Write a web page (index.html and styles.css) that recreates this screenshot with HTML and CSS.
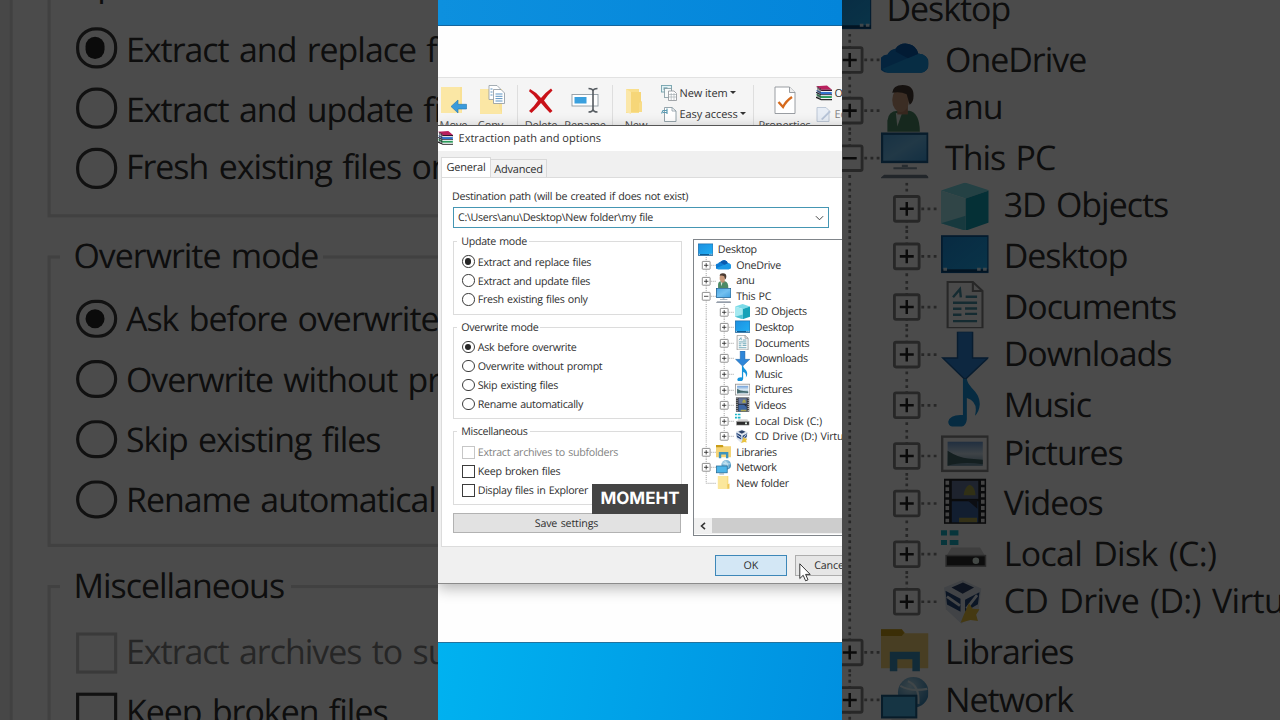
FILE: index.html
```html
<!DOCTYPE html>
<html lang="en">
<head>
<meta charset="utf-8">
<title>Extraction path and options</title>
<link rel="stylesheet" href="styles.css">
</head>
<body>
<svg class="defs" aria-hidden="true">
  <defs>
    <linearGradient id="gScreen" x1="0" y1="0" x2="1" y2="1"><stop offset="0" stop-color="#1e90e0"/><stop offset="1" stop-color="#1fb0f5"/></linearGradient>
    <linearGradient id="gPc" x1="0" y1="0" x2="1" y2="1"><stop offset="0" stop-color="#4fa8e4"/><stop offset=".5" stop-color="#72c0f0"/><stop offset="1" stop-color="#3f9fe0"/></linearGradient>
    <linearGradient id="gSky" x1="0" y1="0" x2="0" y2="1"><stop offset="0" stop-color="#6f9fd8"/><stop offset=".5" stop-color="#d5e6f2"/><stop offset="1" stop-color="#6d93a8"/></linearGradient>
    <radialGradient id="gGlobe" cx=".4" cy=".3" r=".8"><stop offset="0" stop-color="#b9e0f2"/><stop offset="1" stop-color="#2a7fb4"/></radialGradient>
  </defs>
  <symbol id="line" viewBox="0 0 18.5 15.58"><path class="dots" d="M8.2 0V15.58"/></symbol>
  <symbol id="plus" viewBox="0 0 18.5 15.58"><path class="dots" d="M8.2 0V15.58M12.8 8.3H18.5"/><rect class="box" x="4.3" y="4.4" width="7.8" height="7.8" rx=".5"/><path class="sign" d="M6 8.3H10.4M8.2 6.1V10.5"/></symbol>
  <symbol id="plusend" viewBox="0 0 18.5 15.58"><path class="dots" d="M8.2 0V4M12.8 8.3H18.5"/><rect class="box" x="4.3" y="4.4" width="7.8" height="7.8" rx=".5"/><path class="sign" d="M6 8.3H10.4M8.2 6.1V10.5"/></symbol>
  <symbol id="minus" viewBox="0 0 18.5 15.58"><path class="dots" d="M8.2 0V15.58M12.8 8.3H18.5"/><rect class="box" x="4.3" y="4.4" width="7.8" height="7.8" rx=".5"/><path class="sign" d="M6 8.3H10.4"/></symbol>
  <symbol id="elbow" viewBox="0 0 18.5 15.58"><path class="dots" d="M8.2 0V8.3H18.5"/></symbol>

  <symbol id="desktop" viewBox="0 0 16 16"><rect x=".3" y="2" width="15.4" height="12" fill="url(#gScreen)" stroke="#0f5d9c" stroke-width=".6"/><path d="M.3 13H15.7V14H.3Z" fill="#0a4474"/><path d="M.8 13H2M12 13h1.2M14 13h1.2" stroke="#d7f0ff" stroke-width="1"/></symbol>
  <symbol id="cloud" viewBox="0 0 16 16"><path d="M2.500 13A3 3 0 0 1 2.200 6.900C3 5.500 3.800 5.200 4.900 5A4.300 4.300 0 0 1 12.500 6.700A3.200 3.200 0 0 1 16 10 2.900 2.900 0 0 1 13.400 13Z" fill="#0f7bd2"/><path d="M2.500 13Q1 12.600 .6 11.700L9.300 8 12.500 6.700A3.200 3.200 0 0 1 16 10 2.900 2.900 0 0 1 13.400 13Z" fill="#1a99e6"/><path d="M4.900 5A4.300 4.300 0 0 1 12.500 6.700L9 8.200 5 6Z" fill="#0a5bb0"/></symbol>
  <symbol id="person" viewBox="0 0 16 16"><path d="M2.200 16V12Q2.500 9 5.500 8.800H9.500Q13 9.500 13 16Z" fill="#4d8a66"/><path d="M5 9.500 5.500 14 7 9.800Z" fill="#dfe9e2"/><rect x="5.500" y="6.500" width="3.500" height="3.500" fill="#b98568"/><ellipse cx="6.600" cy="5.200" rx="2.800" ry="4" fill="#c99a7c"/><path d="M3.800 2.800Q4 .2 7.300 .2 11 .2 10.900 3.800Q10.900 6 9.600 6.800L8.600 3.300Q6.500 2.300 3.800 2.800Z" fill="#4a3b33"/></symbol>
  <symbol id="pc" viewBox="0 0 16 16"><rect x=".4" y=".6" width="15.200" height="9.400" fill="url(#gPc)" stroke="#1b5f92" stroke-width=".8"/><path d="M4.200 12.100H12M7 11.300H9" stroke="#8798a6" stroke-width=".7"/><path d="M.4 15.200 1.200 14.500H15L15.800 15.200Z" fill="#75808f" stroke="#75808f" stroke-width=".5"/></symbol>
  <symbol id="cube" viewBox="0 0 16 16"><path d="M0 2.600 8 0 16 2.600 8.200 5.300Z" fill="#7adbe8"/><path d="M0 2.600 8.200 5.300V16L0 13.500Z" fill="#a5e9f0"/><path d="M8.200 5.300 16 2.600V13.300L8.200 16Z" fill="#14a2b8"/><path d="M0 13.500 8.200 11V16Z" fill="#4fc3d4"/></symbol>
  <symbol id="docu" viewBox="0 0 16 16"><path d="M2.200 .4H10.600L13.800 3.400V15.700H2.200Z" fill="#fafafa" stroke="#858585" stroke-width=".7"/><path d="M10.600 .4V3.400H13.800" fill="none" stroke="#858585" stroke-width=".7"/><path d="M4 5.500 6.300 2.800 6.600 5.500M8.200 5.300H12M4 7.300H12M4 9.300H6.800M8 9.200H12M4 11.300H6.800M8 11H12M4 13.400H12" fill="none" stroke="#4a92a8" stroke-width=".8"/></symbol>
  <symbol id="down" viewBox="0 0 16 16"><path d="M5.500 0H10.500V8.800H15.600L8 16 .6 8.800H5.500Z" fill="#2f86d8" stroke="#1b5f9f" stroke-width=".5"/></symbol>
  <symbol id="note" viewBox="0 0 16 16"><path d="M7.300 0H8.600C9 3 13 4 12.900 8.500Q12.700 11 11.300 12.200Q12.500 7.500 8.600 6.300V13.500Q8.300 16.300 5 16.300 2.500 16 2.400 14.200 3 11.700 7.300 12Z" fill="#1694dc"/></symbol>
  <symbol id="pict" viewBox="0 0 16 16"><rect x=".4" y="2.300" width="15.200" height="11.400" fill="#fafafa" stroke="#8c8c8c" stroke-width=".8"/><rect x="2.200" y="4" width="11.700" height="8" fill="url(#gSky)"/><path d="M2.200 7Q6 9.400 9 9.600L13.900 10V11.500Q7 10.500 2.200 12Z" fill="#44696c"/></symbol>
  <symbol id="film" viewBox="0 0 16 16"><rect x="1" y=".5" width="14" height="15" fill="#25262a"/><path d="M2.100 1.200V15M13.900 1.200V15" stroke="#e6e6e6" stroke-width="1.200" stroke-dasharray="1.300 .8"/><rect x="3.600" y="1.200" width="8.800" height="6" fill="#66779c"/><rect x="3.600" y="8" width="8.800" height="7" fill="#3d66a3"/><path d="M7.500 6Q8 3 9.500 2.500 11.300 3 11.500 6Z" fill="#a8a548"/><path d="M6 13.500h6v1.500H6Z" fill="#b0a850"/><path d="M3.600 7.500h5l3.500 3V7.500Z" fill="#2b3042"/></symbol>
  <symbol id="disk" viewBox="0 0 16 16"><path d="M0 .8h2v1.700H0ZM2.900 .8h2.900v1.700H2.900ZM0 4h2v1.700H0ZM2.900 4h2.900v1.700H2.900Z" fill="#18b5c9"/><path d="M3.500 6.500H13L14.800 9.500H1.700Z" fill="#d2d2d2"/><rect x="1.700" y="9.200" width="13.100" height="3.500" fill="#2c2c2c" stroke="#8f8f8f" stroke-width=".5"/><circle cx="11.600" cy="10.900" r="1.100" fill="#e5f5ea"/></symbol>
  <symbol id="vbox" viewBox="0 0 16 16"><path d="M1 3 7.200 .5 13.400 3.300 12.500 11 6.800 15 1.600 10.200Z" fill="#dce4ee"/><path d="M3.500 3 7.300 1.300 11 3 7.200 5Z" fill="#2c4269"/><path d="M1.500 4 6.500 6.700V11L2 8.600ZM8 7 12.800 4.500 12.300 8.500 8 11Z" fill="#27477c"/><path d="M2 6 6.300 9M8.500 10 12 5.500" stroke="#e6edf5" stroke-width=".9"/><path d="M9.300 8.200 10.500 10 12.800 10.200 11.700 12 12.300 14.100 9.800 13.800 6.500 14.700 7.600 12Z" fill="#e9c23f"/></symbol>
  <symbol id="library" viewBox="0 0 16 16"><path d="M0 1H7L8.200 2.400H16V14H0Z" fill="#f4d477"/><path d="M0 1H7L7.800 2.300 7 3.300H0Z" fill="#c99d19"/><path d="M3 15V8.500H13V15H10.500V11H5.500V15Z" fill="#3e94bd"/></symbol>
  <symbol id="network" viewBox="0 0 16 16"><circle cx="10.800" cy="5.200" r="5.100" fill="url(#gGlobe)"/><path d="M9 1.500Q13 3 12.500 9M6.500 3Q10 5 15.500 4" fill="none" stroke="#d8edf5" stroke-width=".7"/><rect x=".4" y="6.300" width="11.400" height="7.200" fill="#4db5e8" stroke="#1c618c" stroke-width=".7"/><path d="M3.500 14.700H8.500" stroke="#6e8698" stroke-width=".8"/></symbol>
  <symbol id="folder" viewBox="0 0 16 16"><path d="M2 1H13V14.500H2Z" fill="#f8dd83"/><path d="M2 1H11.500V12L13 14.500H2Z" fill="#fbe79c"/><path d="M12 10 14.200 9V14.500H12Z" fill="#eec85a"/></symbol>
  <symbol id="books" viewBox="0 0 16 16"><path d="M0 1.200 11 .5 16 4.800H5Z" fill="#b8205d"/><path d="M5 4.800H16V6H5.500L0 2Z" fill="#37152a"/><path d="M1 5.200 5 7H15.800V9H5L0 5.500Z" fill="#3272cc"/><path d="M0 6.800 5 9.200H16V10.200H5L0 8Z" fill="#181f38"/><path d="M1 9 5 11H15.800V13H5L0 10Z" fill="#2c9b5b"/><path d="M0 11.500 5 14H16V15.300H5L0 13Z" fill="#1c1c1c"/><path d="M5 6.500H15M5 10.600H15M5 13.600H15" stroke="#e8eef0" stroke-width=".7"/><path d="M2 1.500V13M4 3V14" stroke="#2b2830" stroke-width=".9"/></symbol>

  <symbol id="moveto" viewBox="0 0 28 30"><path d="M1 2H22V28H1Z" fill="#f9e195"/><path d="M1 2H20V22L22 28H1Z" fill="#fbe7a5"/><path d="M11 21.500 18 15V19.300H26.500V24H18V28Z" fill="#3a9bdc" stroke="#2576ac" stroke-width=".6"/></symbol>
  <symbol id="copyto" viewBox="0 0 28 30"><path d="M1 4H23V29H1Z" fill="#f9e195"/><path d="M1 4H20V22L23 29H1Z" fill="#fbe7a5"/><path d="M10 .5H18L21 3.500V14.500H10Z" fill="#fff" stroke="#909aa2" stroke-width=".8"/><path d="M14.500 4.500H22L25.500 8V18.500H14.500Z" fill="#fff" stroke="#8c969e" stroke-width=".8"/><path d="M16.500 9H23.500M16.500 11.300H23.500M16.500 13.600H23.500M16.500 16H23.500M11.500 4H13.500M11.500 7H13.500M11.500 10H13.500" stroke="#5c93c2" stroke-width="1"/></symbol>
  <symbol id="cross" viewBox="0 0 28 30"><path d="M3 4Q9 7 14 13 19 7 24 3.500L25.500 5.500Q20.500 10 17 15.500 21 21 25.500 26L23 28Q18 23 14 18 9.500 23.500 4.500 28L2 26Q7.500 21 11 15.500 7.500 10 2 6.200Z" fill="#c91118"/></symbol>
  <symbol id="rename" viewBox="0 0 30 30"><rect x="1" y="9.500" width="26" height="11.500" fill="#fff" stroke="#909ba3" stroke-width=".9"/><rect x="3.500" y="12" width="12" height="6.500" fill="#3aa0de"/><path d="M17.500 3.500Q21.500 3.500 22 5.800 22.500 3.500 26.500 3.500M22 5V25M17.500 27Q21.500 27 22 24.500 22.500 27 26.500 27" fill="none" stroke="#555b60" stroke-width="1.600"/></symbol>
  <symbol id="bigfolder" viewBox="0 0 28 30"><path d="M4 4H17V28H4Z" fill="#f9df8c"/><path d="M4 4 9 7V29L4 27Z" fill="#fbe7a9"/><path d="M9 7H19V27H9Z" fill="#f6d678"/><path d="M17 18 20 16V27H17Z" fill="#f8dc88"/></symbol>
  <symbol id="props" viewBox="0 0 28 30"><path d="M4 2H18.500L24 7.500V28.500H4Z" fill="#fff" stroke="#8e9398" stroke-width=".9"/><path d="M18.500 2V7.500H24" fill="#eee" stroke="#8e9398" stroke-width=".9"/><path d="M7.500 17 12 22Q15 16 21 12" fill="none" stroke="#d66a1c" stroke-width="2.400"/></symbol>
  <symbol id="newitem" viewBox="0 0 16 16"><rect x=".5" y=".5" width="10" height="6.500" fill="#e6f2f5" stroke="#73a3ae" stroke-width=".9"/><path d="M2.500 2.300H6.500V5H2.500Z" fill="#78aebb"/><rect x="3.500" y="3.500" width="7" height="9" fill="#f8fafa" stroke="#7f979e" stroke-width=".8"/><path d="M7.500 6H13L15.500 8.500V15.500H7.500Z" fill="#fff" stroke="#8b8f94" stroke-width=".8"/><path d="M7.500 9.500H15.500M7.500 12H15.500M10.200 8V15.500M13 8V15.500" stroke="#9aa4aa" stroke-width=".6"/></symbol>
  <symbol id="easy" viewBox="0 0 16 16"><path d="M3.500 1.500H11L15 5V15.500H3.500Z" fill="#fff" stroke="#8b9ba3" stroke-width=".9"/><path d="M11 1.500V5H15" fill="none" stroke="#8b9ba3" stroke-width=".8"/><path d="M.5 7.500 2 4.500H6M2 6.500H6M6 2.500V8" fill="none" stroke="#5c9bb2" stroke-width="1.200"/></symbol>
  <symbol id="edit" viewBox="0 0 16 16"><path d="M1 1.500H10L13 4.500V15.500H1Z" fill="#dfe8f5" stroke="#8fa3bd" stroke-width=".9"/><path d="M5 13 13.500 4.500 14.800 6 6.500 14Z" fill="#8fa5c5"/></symbol>
</svg>

<div class="backdrop" id="backdrop"></div>

<main class="scene" id="scene">
  <section class="explorer">
    <div class="blank"></div>
    <div class="ribbon">
      <div class="tool"><svg class="big"><use href="#moveto"/></svg><span>Move</span></div>
      <div class="tool"><svg class="big"><use href="#copyto"/></svg><span class="copy">Copy</span></div>
      <i class="rule"></i>
      <div class="tool"><svg class="big"><use href="#cross"/></svg><span>Delete</span></div>
      <div class="tool"><svg class="big wide"><use href="#rename"/></svg><span class="ren">Rename</span></div>
      <i class="rule"></i>
      <div class="tool"><svg class="big"><use href="#bigfolder"/></svg><span>New</span></div>
      <div class="stack">
        <div class="item"><svg><use href="#newitem"/></svg><span>New item</span><b class="caret"></b></div>
        <div class="item"><svg><use href="#easy"/></svg><span>Easy access</span><b class="caret"></b></div>
      </div>
      <i class="rule"></i>
      <div class="tool"><svg class="big"><use href="#props"/></svg><span>Properties</span></div>
      <div class="stack last">
        <div class="item"><svg><use href="#books"/></svg><span>Open</span></div>
        <div class="item faded"><svg><use href="#edit"/></svg><span>Edit</span></div>
      </div>
    </div>
  </section>

  <section class="dialog">
    <header class="title"><svg><use href="#books"/></svg><span>Extraction path and options</span></header>
    <nav class="tabs"><span class="tab on">General</span><span class="tab">Advanced</span></nav>
    <div class="panel">
      <label class="dest">Destination path (will be created if does not exist)</label>
      <div class="combo"><span>C:\Users\anu\Desktop\New folder\my file</span><svg viewBox="0 0 10 6"><path d="M1 1 5 5 9 1"/></svg></div>
      <div class="columns">
        <div class="options">
          <fieldset class="group g1"><legend>Update mode</legend>
            <div class="opt"><i class="radio on"></i><span>Extract and replace files</span></div>
            <div class="opt"><i class="radio"></i><span>Extract and update files</span></div>
            <div class="opt"><i class="radio"></i><span>Fresh existing files only</span></div>
          </fieldset>
          <fieldset class="group g2"><legend>Overwrite mode</legend>
            <div class="opt"><i class="radio on"></i><span>Ask before overwrite</span></div>
            <div class="opt"><i class="radio"></i><span>Overwrite without prompt</span></div>
            <div class="opt"><i class="radio"></i><span>Skip existing files</span></div>
            <div class="opt"><i class="radio"></i><span>Rename automatically</span></div>
          </fieldset>
          <fieldset class="group g3"><legend>Miscellaneous</legend>
            <div class="opt off"><i class="check"></i><span>Extract archives to subfolders</span></div>
            <div class="opt"><i class="check"></i><span>Keep broken files</span></div>
            <div class="opt"><i class="check"></i><span>Display files in Explorer</span></div>
          </fieldset>
          <div class="save"><span>Save settings</span></div>
        </div>
        <div class="tree">
          <div class="rows">
            <div class="row"><svg class="ic"><use href="#desktop"/></svg><span>Desktop</span></div>
            <div class="row"><svg class="g"><use href="#plus"/></svg><svg class="ic"><use href="#cloud"/></svg><span>OneDrive</span></div>
            <div class="row"><svg class="g"><use href="#plus"/></svg><svg class="ic"><use href="#person"/></svg><span>anu</span></div>
            <div class="row"><svg class="g"><use href="#minus"/></svg><svg class="ic"><use href="#pc"/></svg><span>This PC</span></div>
            <div class="row"><svg class="g"><use href="#line"/></svg><svg class="g"><use href="#plus"/></svg><svg class="ic"><use href="#cube"/></svg><span>3D Objects</span></div>
            <div class="row"><svg class="g"><use href="#line"/></svg><svg class="g"><use href="#plus"/></svg><svg class="ic"><use href="#desktop"/></svg><span>Desktop</span></div>
            <div class="row"><svg class="g"><use href="#line"/></svg><svg class="g"><use href="#plus"/></svg><svg class="ic"><use href="#docu"/></svg><span>Documents</span></div>
            <div class="row"><svg class="g"><use href="#line"/></svg><svg class="g"><use href="#plus"/></svg><svg class="ic"><use href="#down"/></svg><span>Downloads</span></div>
            <div class="row"><svg class="g"><use href="#line"/></svg><svg class="g"><use href="#plus"/></svg><svg class="ic"><use href="#note"/></svg><span>Music</span></div>
            <div class="row"><svg class="g"><use href="#line"/></svg><svg class="g"><use href="#plus"/></svg><svg class="ic"><use href="#pict"/></svg><span>Pictures</span></div>
            <div class="row"><svg class="g"><use href="#line"/></svg><svg class="g"><use href="#plus"/></svg><svg class="ic"><use href="#film"/></svg><span>Videos</span></div>
            <div class="row"><svg class="g"><use href="#line"/></svg><svg class="g"><use href="#plus"/></svg><svg class="ic"><use href="#disk"/></svg><span class="spaced">Local Disk (C:)</span></div>
            <div class="row"><svg class="g"><use href="#line"/></svg><svg class="g"><use href="#plusend"/></svg><svg class="ic"><use href="#vbox"/></svg><span class="spaced">CD Drive (D:) Virtu</span></div>
            <div class="row"><svg class="g"><use href="#plus"/></svg><svg class="ic"><use href="#library"/></svg><span>Libraries</span></div>
            <div class="row"><svg class="g"><use href="#plus"/></svg><svg class="ic"><use href="#network"/></svg><span>Network</span></div>
            <div class="row"><svg class="g"><use href="#elbow"/></svg><svg class="ic"><use href="#folder"/></svg><span>New folder</span></div>
          </div>
          <div class="scroll"><svg viewBox="0 0 6 8"><path d="M5 .8 1.500 4 5 7.200"/></svg><i></i></div>
        </div>
      </div>
    </div>
    <footer class="actions"><div class="btn primary"><span>OK</span></div><div class="btn"><span>Cancel</span></div></footer>
  </section>
</main>

<svg class="cursor" viewBox="0 0 12 19"><path d="M.8 .8V15.500L4.200 12.300 6.600 17.800 9 16.800 6.600 11.400H11.200Z"/></svg>
<div class="caption">MOMEHT</div>
<script src="main.js"></script>
</body>
</html>
```
FILE: styles.css
```css
* { box-sizing: border-box; }
body { margin: 0; width: 1280px; height: 720px; overflow: hidden; position: relative; background: #4b4b4b;
  font-family: "Open Sans", "Noto Sans", sans-serif; font-size: 10.7px; letter-spacing: -.31px; word-spacing: .8px; color: #303030; display: flex; justify-content: center;
  text-rendering: geometricPrecision; }
.defs { position: absolute; width: 0; height: 0; }
svg { display: block; flex: none; }

.backdrop { position: absolute; inset: 0; overflow: hidden; }
.backdrop::after { content: ""; position: absolute; inset: 0; background: rgba(0, 0, 0, .705); }
.backdrop .scene { transform-origin: 0 0; transform: translateY(-780.6px) scale(3.1683); }

.scene { position: relative; flex: none; width: 404px; height: 720px; overflow: hidden; padding-top: 25px;
  background: linear-gradient(100deg, #00b2f0 0%, #0090e0 100%) bottom / 100% 80px no-repeat, linear-gradient(90deg, #0d90de, #0385da); }

.explorer { height: 618px; background: #fefefe; border-top: 1px solid #15659c; border-bottom: 1px solid #24729c; }
.blank { height: 51px; }
.ribbon { height: 90px; border-top: 1px solid #e2e2e2; background: #f5f5f5; padding-top: 7px; font-size: 11px; letter-spacing: -.1px; word-spacing: 0;
  display: grid; grid-template-columns: 31px 48px 1px 46px 48px 1px 46px 94px 1px 61px 27px; }
.tool { display: flex; flex-direction: column; align-items: center; white-space: nowrap; color: #4a4a4a; }
.tool span { line-height: 14px; margin-top: 4px; }
.tool .copy { margin-left: -5px; }
.tool .ren { margin-left: -6px; }
.big { width: 28px; height: 30px; }
.wide { width: 30px; margin-left: -5px; }
.rule { height: 60px; background: #dedede; }
.stack { display: flex; flex-direction: column; gap: 5px; padding-left: 2px; }
.stack.last { padding-left: 1px; }
.item { height: 16px; display: flex; align-items: center; gap: 2.500px; white-space: nowrap; color: #333; }
.item svg { width: 16px; height: 16px; }
.item.faded { opacity: .6; }
.caret { border: 3px solid transparent; border-top-color: #333; border-bottom: 0; margin-left: 0; margin-top: -1px; }

.dialog { position: absolute; left: 0; top: 125px; width: 500px; height: 459px; background: #f0f0f0; border-top: 1px solid #555; border-bottom: 1px solid #8b8b8b;
  box-shadow: 0 4px 14px rgba(0, 0, 0, .3); }
.title { height: 25px; background: #fff; display: flex; align-items: center; gap: 5.500px; font-size: 11px; letter-spacing: .02px; word-spacing: 0; color: #333; }
.title svg { width: 15px; height: 16px; margin-top: -1px; }
.title span { margin-top: -.5px; }
.tabs { height: 26px; display: flex; align-items: flex-end; padding-left: 3px; font-size: 11px; letter-spacing: -.2px; }
.tab { height: 18px; width: 56px; border: 1px solid #d9d9d9; border-left: 0; border-bottom: 0; background: #f2f2f2; display: flex; align-items: center; justify-content: center; padding-top: 1px; }
.tab.on { height: 20px; width: 50px; border-left: 1px solid #dcdcdc; background: #fff; padding: 0; }
.panel { height: 370px; margin-left: 3px; background: #fff; border: 1px solid #dcdcdc; padding: 10px 0 0 10.500px; }
.dest { display: block; height: 19px; line-height: 18px; margin-left: -.5px; }
.combo { width: 376.500px; height: 21px; border: 1px solid #4596b3; display: flex; align-items: center; justify-content: space-between; padding: 1px 4px 0 4.500px; }
.combo svg { width: 9px; height: 6px; fill: none; stroke: #444; stroke-width: 1.100; }
.columns { display: flex; margin-top: 12px; gap: 11px; }
.options { width: 229.500px; }
.group { position: relative; margin: 0; padding: 0 0 0 8.700px; border: 1px solid #dcdcdc; min-width: 0; }
.group legend { padding: 0 2px 0 4px; margin-left: -5px; height: 15px; line-height: 17px; }
.g1 { height: 81px; margin-top: -6px; }
.g2 { height: 99px; margin-top: 5px; }
.g3 { height: 81px; margin-top: 5px; }
.opt { height: 18.950px; display: flex; align-items: center; gap: 3.200px; white-space: nowrap; }
.opt span, .row span { position: relative; top: 1px; }
.g1 .opt:nth-of-type(1) { margin-top: 3.100px; }
.g2 .opt:nth-of-type(1) { margin-top: 2.700px; }
.g3 .opt:nth-of-type(1) { margin-top: 4px; }
.radio, .check { width: 12.400px; height: 12.400px; flex: none; border: 1px solid #3c3c3c; background: #fff; }
.radio { border-radius: 50%; display: flex; align-items: center; justify-content: center; }
.radio.on::after { content: ""; width: 6.200px; height: 6.200px; border-radius: 50%; background: #262626; }
.off { color: #838383; }
.off .check { border-color: #c6c6c6; }
.save { margin-top: 8px; height: 20px; width: 228px; border: 1px solid #b2b2b2; background: #e2e2e2; display: flex; align-items: center; justify-content: center; letter-spacing: -.15px; }
.save span, .btn span { margin-top: 1px; }
.tree { width: 200px; height: 297px; border: 1px solid #80858a; background: #fff; display: flex; flex-direction: column; justify-content: space-between; margin-top: -1px; }
.rows { padding: 1.400px 0 0 3.600px; }
.row { height: 15.580px; display: flex; align-items: center; white-space: nowrap; }
.row .g { width: 18.500px; height: 15.580px; }
.row .ic { width: 15.200px; height: 15.200px; margin-right: 5px; }
.row .spaced { letter-spacing: -.2px; word-spacing: .9px; }
.dots { fill: none; stroke: #858585; stroke-width: .85; stroke-dasharray: .9 1.0475; }
.box { fill: #fff; stroke: #858585; stroke-width: .9; }
.sign { stroke: #222; stroke-width: .8; }
.scroll { height: 16px; display: flex; align-items: center; background: #f0f0f0; padding-left: 6px; gap: 6px; margin-bottom: 1.500px; }
.scroll svg { width: 6px; height: 8px; fill: none; stroke: #333; stroke-width: 1.600; }
.scroll i { flex: 1; height: 15px; background: #cdcdcd; }
.actions { display: flex; gap: 8px; padding: 8px 0 0 277px; }
.btn { width: 71.500px; height: 21px; border: 1px solid #adadad; background: #e6e6e6; display: flex; align-items: center; justify-content: center; letter-spacing: -.15px; }
.btn.primary { border-color: #3d87b8; background: #d3e7f5; }

.cursor { position: absolute; left: 799px; top: 563px; width: 12px; height: 19px; fill: #fff; stroke: #222; stroke-width: .9; }
.caption { position: absolute; left: 592px; top: 484px; width: 96px; height: 30px; background: #444; color: #fff; font: 700 17px/31px Inter, sans-serif; letter-spacing: 0; text-align: center; white-space: nowrap; }
```
FILE: main.js
```js
// Enlarged, dimmed copy of the scene behind the portrait frame.
const copy = document.getElementById("scene").cloneNode(true);
copy.removeAttribute("id");
copy.setAttribute("aria-hidden", "true");
document.getElementById("backdrop").appendChild(copy);
```
